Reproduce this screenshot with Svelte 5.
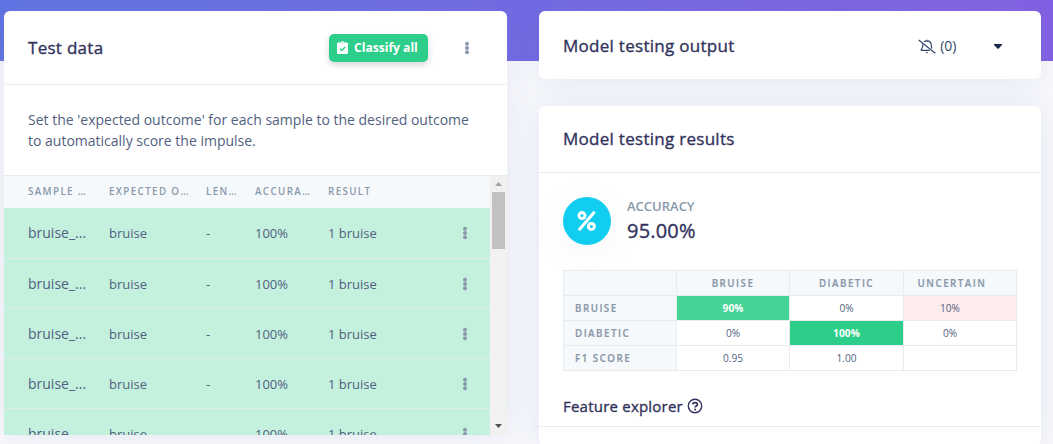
<script>
  const rows = Array.from({ length: 5 }, () => ({
    name: 'bruise_...', expected: 'bruise', length: '-', accuracy: '100%', result: '1 bruise'
  }));
  const matrix = [
    { label: 'BRUISE', cells: [['90%', 'good soft'], ['0%', ''], ['10%', 'bad']] },
    { label: 'DIABETIC', cells: [['0%', ''], ['100%', 'good'], ['0%', '']] },
    { label: 'F1 SCORE', cells: [['0.95', ''], ['1.00', ''], ['', '']] }
  ];
</script>

{#snippet dots()}
  <svg class="dots" width="6" height="14" viewBox="0 0 6 14"><circle cx="3" cy="2.7" r="2" /><circle cx="3" cy="7" r="2" /><circle cx="3" cy="11.3" r="2" /></svg>
{/snippet}

<div class="page">
  <section class="card samples">
    <header class="head">
      <h2>Test data</h2>
      <button class="classify">
        <svg width="11" height="13" viewBox="0 0 11 13"><path fill="#fff" d="M1.2 1.6H3.6A2 2 0 0 1 7.4 1.6H9.8A1.2 1.2 0 0 1 11 2.8V11.8A1.2 1.2 0 0 1 9.8 13H1.2A1.2 1.2 0 0 1 0 11.8V2.8A1.2 1.2 0 0 1 1.2 1.6Z" /><circle cx="5.5" cy="2" r=".6" fill="#2dce89" /><path d="M3 7.7 4.8 9.4 8.2 6" fill="none" stroke="#2dce89" stroke-width="1.4" /></svg>
        <span>Classify all</span>
      </button>
      {@render dots()}
    </header>
    <p class="intro">Set the 'expected outcome' for each sample to the desired outcome<br />to automatically score the impulse.</p>
    <div class="scroller">
      <div class="list">
        <div class="row labels"><span>SAMPLE …</span><span>EXPECTED O…</span><span>LEN…</span><span>ACCURA…</span><span>RESULT</span></div>
        {#each rows as r}
          <div class="row sample"><span class="name">{r.name}</span><span>{r.expected}</span><span>{r.length}</span><span>{r.accuracy}</span><span>{r.result}</span>{@render dots()}</div>
        {/each}
      </div>
      <div class="bar">
        <svg width="7" height="4" viewBox="0 0 7 4"><path d="M0 4 3.5 0 7 4Z" fill="#a3a3a3" /></svg>
        <div class="thumb"></div>
        <svg class="down" width="7" height="4" viewBox="0 0 7 4"><path d="M0 0H7L3.5 4Z" fill="#505050" /></svg>
      </div>
    </div>
  </section>

  <div class="right">
    <section class="card output">
      <h2>Model testing output</h2>
      <span class="bell">
        <svg width="18" height="15" viewBox="0 0 18 15" fill="none" stroke="#32476b" stroke-width="1.2"><path d="M.7 1 17.3 14.3" /><path d="M5.9 2.9C6.7 2.2 7.7 1.9 9 1.9C11.6 2 13.2 3.7 13.3 6.2C13.3 7.6 13.5 8.6 13.9 9.4M4.9 5.2C4.9 8.6 4.4 9.1 3.5 10.1C3 10.7 3.2 11.4 3.9 11.4H11.8" /><path d="M7.4 13.2H10.6L9 14.6ZM8.4 .8H9.6V1.6H8.4Z" fill="#32476b" stroke="none" /></svg>
        <span>(0)</span>
      </span>
      <svg class="caret" width="8" height="5" viewBox="0 0 8 5"><path d="M0 0H8V1L4.5 4.7H3.5L0 1Z" fill="#172b4d" /></svg>
    </section>

    <section class="card results">
      <h2 class="resulthead">Model testing results</h2>
      <div class="score">
        <div class="disc"><svg width="20" height="22" viewBox="0 0 20 22" fill="none" stroke="#fff" stroke-width="3"><circle cx="5" cy="5.6" r="3" /><circle cx="14.4" cy="16.4" r="3" /><path d="M16.8 2.7 2.6 19.2" stroke-linecap="round" /></svg></div>
        <div><div class="metric">ACCURACY</div><div class="value">95.00%</div></div>
      </div>
      <div class="matrix">
        <div class="th"></div><div class="th mid">BRUISE</div><div class="th mid">DIABETIC</div><div class="th mid last">UNCERTAIN</div>
        {#each matrix as m}
          <div class="th">{m.label}</div>
          {#each m.cells as [text, kind], i}
            <div class="td {kind}" class:last={i === 2}>{text}</div>
          {/each}
        {/each}
      </div>
      <div class="explorer">
        <h3>Feature explorer</h3>
        <svg width="16" height="16" viewBox="0 0 16 16" fill="none" stroke="#32325d" stroke-width="1.4"><circle cx="8" cy="8" r="6.7" /><path d="M5.7 6.3C6 4.2 10.4 4.1 10.4 6.5C10.4 8 8.1 8 8.1 9.5" stroke-width="1.7" /><circle cx="8.1" cy="11.6" r="1" fill="#32325d" stroke="none" /></svg>
      </div>
    </section>
  </div>
</div>

<style>
  :global(body) { margin: 0; }
  .page {
    box-sizing: border-box; width: 1053px; height: 444px; overflow: hidden;
    display: flex; align-items: flex-start; gap: 32px; padding: 11px 12px 0 4px;
    font-family: "Open Sans", sans-serif; color: #525f7f;
    background: linear-gradient(87deg, #5e72e4, #825ee4) 0 0 / 100% 61px no-repeat, #f8f9fe;
  }
  h2, h3, p { margin: 0; }
  h2, h3 { color: #32325d; font-weight: 500; letter-spacing: .28px; -webkit-text-stroke: .35px #32325d; }
  h2 { font-size: 17px; line-height: 26px; }
  svg { display: block; flex: none; }
  .card { background: #fff; border-radius: 6px; box-shadow: 0 0 32px rgba(136, 152, 170, .18); }
  .samples { width: 503px; flex: none; height: 424px; border-bottom-right-radius: 0; border-bottom-left-radius: 0; }
  .head { box-sizing: border-box; height: 74px; border-bottom: 1px solid #edeef0; display: flex; align-items: center; padding: 0 37px 0 24px; }
  .head h2 { flex: 1; }
  .classify {
    box-sizing: border-box; width: 99px; height: 28px; padding: 0 8px; margin-right: 36px; border: 0; border-radius: 5px;
    display: flex; align-items: center; gap: 6px; color: #fff; background: #2dce89;
    font: 700 12.1px/18px "Open Sans", sans-serif; white-space: nowrap; box-shadow: 0 3px 6px rgba(50, 50, 93, .2);
  }
  .dots { fill: #8898aa; }
  .intro { box-sizing: border-box; height: 90px; padding: 24px 0 0 24px; font-size: 14px; line-height: 21px; white-space: nowrap; }
  .scroller { box-sizing: border-box; height: 260px; border-top: 1px solid #e9ecef; display: flex; overflow: hidden; }
  .list { width: 486px; }
  .row { box-sizing: border-box; display: grid; grid-template-columns: 81px 97px 49px 73px 134px 6px; padding-left: 24px; align-items: center; white-space: nowrap; }
  .labels { height: 32px; background: #f6f9fc; color: #8898aa; font-size: 9.75px; font-weight: 600; letter-spacing: 1.4px; padding-bottom: 2px; }
  .sample { height: 50px; background: #c4f1de; border-bottom: 1px solid #e3ebeb; font-size: 13px; }
  .sample:nth-child(2) { height: 51px; }
  .name { font-size: 14px; line-height: 20px; }
  .sample:nth-child(2) .name { padding-bottom: 1px; }
  .bar { width: 17px; display: flex; flex-direction: column; align-items: center; background: #f1f1f1; }
  .bar svg { margin: 6px 0; }
  .thumb { width: 13px; height: 57px; background: #c1c1c1; }
  .bar .down { margin: auto 0 7px; }
  .right { width: 502px; display: flex; flex-direction: column; gap: 27px; }
  .output { box-sizing: border-box; height: 68px; display: flex; align-items: center; padding: 2px 39px 0 24px; }
  .output h2 { flex: 1; }
  .bell { display: flex; align-items: center; gap: 4px; color: #32476b; font-size: 14px; line-height: 20px; margin-right: 37.5px; }
  .results { height: 340px; }
  .resulthead { box-sizing: border-box; height: 67px; border-bottom: 1px solid #e9ecef; padding: 20px 24px; }
  .score { display: flex; gap: 16px; padding: 24px 24px 0; height: 73px; }
  .disc { width: 48px; height: 48px; border-radius: 50%; background: #11cdef; display: grid; place-items: center; box-shadow: 0 8px 32px rgba(136, 152, 170, .09); }
  .metric { color: #8898aa; font-size: 13px; font-weight: 600; line-height: 18px; }
  .value { color: #32325d; font-size: 20px; font-weight: 500; letter-spacing: .2px; -webkit-text-stroke: .35px #32325d; line-height: 32px; }
  .matrix { box-sizing: border-box; width: 454px; margin-left: 24px; border: solid #e9ecef; border-width: 1px 0 0 1px; display: grid; grid-template-columns: 113px 113px 114px 113px; grid-auto-rows: 25px; font-size: 10.1px; }
  .th, .td { box-sizing: border-box; border: solid #e9ecef; border-width: 0 1px 1px 0; line-height: 24px; }
  .th { background: #f6f9fc; color: #8898aa; padding-left: 11px; font-size: 9.75px; font-weight: 600; letter-spacing: 1.5px; line-height: 25px; -webkit-text-stroke: .2px #8898aa; }
  .mid, .td { padding-left: 0; text-align: center; }
  .last { padding-right: 20px; }
  .mid.last { padding-right: 16px; }
  .good { background: #2dce89; color: #fff; font-weight: 700; letter-spacing: .1px; }
  .soft { background: #45d496; }
  .bad { background: #feebed; }
  .explorer { box-sizing: border-box; display: flex; align-items: center; gap: 4px; height: 56px; margin: 0 -3px 0 -4px; padding: 15px 0 0 28px; border-bottom: 1px solid #e9ecef; }
  h3 { font-size: 15px; line-height: 22px; letter-spacing: .22px; padding-bottom: 1px; }
</style>
